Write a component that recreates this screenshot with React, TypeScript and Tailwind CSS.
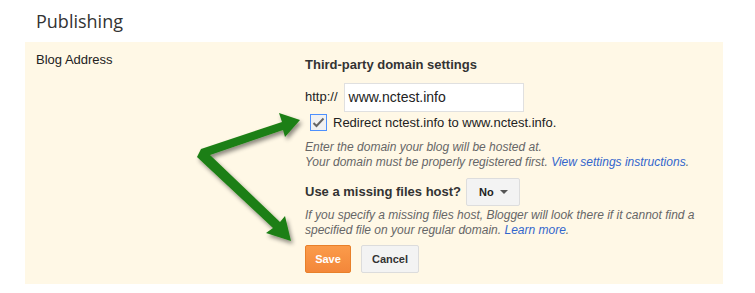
import React from "react";

function Arrows() {
  return (
    <svg
      className="pointer-events-none absolute left-0 top-0"
      width="755"
      height="293"
      viewBox="0 0 755 293"
    >
      <defs>
        <filter id="sh" x="-20%" y="-20%" width="140%" height="140%">
          <feDropShadow dx="2" dy="3" stdDeviation="2" floodColor="#000" floodOpacity="0.45" />
        </filter>
      </defs>
      <g filter="url(#sh)" fill="#1d7f13">
        <path d="M201 149 L282 122 L279 113 L300 120 L285 137 L283 130 L210 155 L280 222 L285 216 L291 241 L266 233 L273 228 L197 157 Z" />
      </g>
    </svg>
  );
}

export default function App() {
  return (
    <div
      className="relative h-[293px] w-[755px] overflow-hidden bg-white"
      style={{ fontFamily: '"Liberation Sans", Arial, sans-serif' }}
    >
      <div className="flex h-[42px] items-center pl-[36px]">
        <h1 className="font-['Open_Sans',sans-serif] text-[18px] text-[#333] leading-none">
          Publishing
        </h1>
      </div>
      <div className="ml-[25px] flex h-[242px] w-[698px] bg-[#fff8e6] pt-[8px]">
        <div className="w-[280px] pl-[11px] text-[13px] text-[#222]">Blog Address</div>
        <div className="flex flex-col text-[13px] text-[#222]">
          <div className="mt-[5px] text-[13px] font-bold text-[#333]">
            Third-party domain settings
          </div>
          <div className="mt-[8px] flex items-center">
            <span className="mr-[6px] text-[13px]">http://</span>
            <div className="flex h-[29px] w-[180px] items-center border border-[#e0e0e0] bg-white px-[4px] text-[14px] text-[#222]">
              www.nctest.info
            </div>
          </div>
          <div className="mt-[1px] flex items-center pl-[5px]">
            <div className="flex h-[17px] w-[17px] items-center justify-center border border-[#4d90fe] bg-[#f1f1f1]">
              <svg width="13" height="11" viewBox="0 0 13 11">
                <path d="M1.5 6 L4.5 9 L11.5 1.5" fill="none" stroke="#666" strokeWidth="2" />
              </svg>
            </div>
            <span className="ml-[6px] text-[13px]">Redirect nctest.info to www.nctest.info.</span>
          </div>
          <div className="mt-[8px] text-[12px] italic leading-[15px] text-[#666]">
            Enter the domain your blog will be hosted at.
            <br />
            Your domain must be properly registered first.{" "}
            <span className="text-[#36c]">View settings instructions</span>.
          </div>
          <div className="mt-[8px] flex items-center">
            <span className="text-[13px] font-bold text-[#333]">Use a missing files host?</span>
            <div className="ml-[5px] flex h-[28px] w-[54px] items-center justify-between rounded-[2px] border border-[#ddd] bg-[#f3f3f3] pl-[12px] pr-[11px]">
              <span className="text-[11px] font-bold text-[#222]">No</span>
              <svg width="8" height="4" viewBox="0 0 8 4">
                <path d="M0 0 L8 0 L4 4 Z" fill="#555" />
              </svg>
            </div>
          </div>
          <div className="mt-[2px] text-[12px] italic leading-[15px] text-[#666]">
            If you specify a missing files host, Blogger will look there if it cannot find a
            <br />
            specified file on your regular domain. <span className="text-[#36c]">Learn more</span>.
          </div>
          <div className="mt-[7px] flex gap-[10px]">
            <div className="flex h-[28px] w-[46px] items-center justify-center rounded-[2px] border border-[#e8802a] bg-gradient-to-b from-[#fb9b4a] to-[#f3873a] text-[11px] font-bold text-white">
              Save
            </div>
            <div className="flex h-[28px] w-[58px] items-center justify-center rounded-[2px] border border-[#dcdcdc] bg-[#f3f3f3] text-[11px] font-bold text-[#333]">
              Cancel
            </div>
          </div>
        </div>
      </div>
      <Arrows />
    </div>
  );
}
